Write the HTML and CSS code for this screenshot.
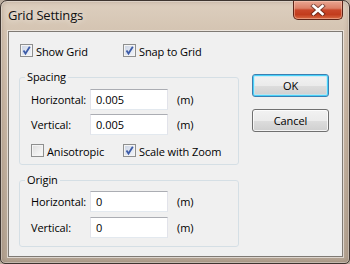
FILE: index.html
```html
<!DOCTYPE html>
<html>
<head>
<meta charset="utf-8">
<link rel="stylesheet" href="styles.css">
</head>
<body>
<div class="window">
  <div class="titlebar">
    <span class="title">Grid Settings</span>
    <div class="close">
      <svg width="16" height="12" viewBox="0 0 16 12"><path d="M3.5 2 L12.5 10 M12.5 2 L3.5 10" stroke="#3a1a14" stroke-width="4.5" stroke-linecap="square" fill="none" opacity=".55"/><path d="M3.5 2 L12.5 10 M12.5 2 L3.5 10" stroke="#fff" stroke-width="2.6" stroke-linecap="square" fill="none"/></svg>
    </div>
  </div>
  <div class="client">
    <div class="left">
      <div class="toprow">
        <label class="check"><span class="box on"><svg width="11" height="11" viewBox="0 0 11 11"><path d="M2.5 5.5 L4.5 8.5 L8.8 1.8" stroke="#3d5ca8" stroke-width="1.8" fill="none"/></svg></span><span class="txt">Show Grid</span></label>
        <label class="check"><span class="box on"><svg width="11" height="11" viewBox="0 0 11 11"><path d="M2.5 5.5 L4.5 8.5 L8.8 1.8" stroke="#3d5ca8" stroke-width="1.8" fill="none"/></svg></span><span class="txt">Snap to Grid</span></label>
      </div>
      <fieldset class="group spacing">
        <legend>Spacing</legend>
        <div class="body">
          <div class="field"><span class="lbl">Horizontal:</span><span class="input">0.005</span><span class="unit">(m)</span></div>
          <div class="field"><span class="lbl">Vertical:</span><span class="input">0.005</span><span class="unit">(m)</span></div>
          <div class="checkrow">
            <label class="check"><span class="box"></span><span class="txt">Anisotropic</span></label>
            <label class="check"><span class="box on"><svg width="11" height="11" viewBox="0 0 11 11"><path d="M2.5 5.5 L4.5 8.5 L8.8 1.8" stroke="#3d5ca8" stroke-width="1.8" fill="none"/></svg></span><span class="txt">Scale with Zoom</span></label>
          </div>
        </div>
      </fieldset>
      <fieldset class="group origin">
        <legend>Origin</legend>
        <div class="body">
          <div class="field"><span class="lbl">Horizontal:</span><span class="input">0</span><span class="unit">(m)</span></div>
          <div class="field"><span class="lbl">Vertical:</span><span class="input">0</span><span class="unit">(m)</span></div>
        </div>
      </fieldset>
    </div>
    <div class="right">
      <div class="btn default">OK</div>
      <div class="btn">Cancel</div>
    </div>
  </div>
</div>
</body>
</html>
```

FILE: styles.css
```css
* { box-sizing: border-box; }
body {
  margin: 0;
  font-family: "Open Sans", "Noto Sans", sans-serif;
  font-size: 11px;
  color: #000;
  background: #bcae9f;
}
.window {
  width: 350px;
  height: 264px;
  border: 1px solid #3e3530;
  border-radius: 7px 7px 5px 5px;
  background: linear-gradient(180deg, #ddcfbf 0px, #d5c5b3 28px, #c7b5a2 120px, #b3a392 100%);
  box-shadow: inset 0 0 0 1px rgba(255,255,255,0.35), inset 0 0 5px rgba(90,60,40,0.35);
  display: flex;
  flex-direction: column;
  overflow: hidden;
}
.titlebar {
  height: 30px;
  display: flex;
  justify-content: space-between;
  align-items: flex-start;
  padding-left: 7px;
}
.title {
  font-size: 13px;
  line-height: 18px;
  letter-spacing: -0.2px;
  margin-top: 5px;
  color: #111;
  text-shadow: 0 0 6px rgba(255,255,255,0.8);
}
.close {
  width: 50px;
  height: 19px;
  margin-right: 6px;
  border: 1px solid #5e2418;
  border-top: none;
  border-radius: 0 0 5px 5px;
  background: linear-gradient(180deg, #e9a692 0%, #dc8067 40%, #c9472a 50%, #c23c1d 75%, #d86a44 100%);
  box-shadow: inset 0 0 0 1px rgba(255,210,190,0.45);
  display: flex;
  align-items: center;
  justify-content: center;
}
.client {
  flex: 1;
  margin: 0 6px 6px 7px;
  background: #f0f0f0;
  border: 1px solid #7f7a74;
  box-shadow: 0 0 0 1px rgba(255,255,255,0.55);
  display: flex;
  gap: 13px;
  padding: 0 0 0 10px;
}
.left {
  width: 220px;
  padding-top: 12px;
  display: flex;
  flex-direction: column;
}
.toprow {
  display: grid;
  grid-template-columns: 103px auto;
  padding-left: 1px;
}
.check {
  display: flex;
  align-items: flex-start;
  gap: 3px;
}
.txt {
  line-height: 16px;
  letter-spacing: -0.1px;
  white-space: nowrap;
}
.box {
  width: 13px;
  height: 13px;
  border: 1px solid #8e8f8f;
  background: linear-gradient(135deg, #dcdcdc 0%, #f0f0f0 60%, #fbfbfb 100%);
  box-shadow: inset 0 0 0 1px #f4f4f4;
  display: flex;
  align-items: center;
  justify-content: center;
  flex: none;
}
.box.on {
  background: linear-gradient(135deg, #c9d2e3 0%, #e4e9f2 60%, #f3f5f9 100%);
}
.group {
  margin: 0;
  padding: 0;
  border: 1px solid #d5dfe5;
  border-radius: 3px;
  min-inline-size: 0;
}
.group legend {
  margin-left: 5px;
  padding: 0 2px;
  line-height: 14px;
  letter-spacing: -0.1px;
}
.spacing { margin-top: 10px; }
.origin { margin-top: 8px; }
.body {
  display: flex;
  flex-direction: column;
  gap: 4px;
  padding-left: 11px;
}
.spacing .body { padding-top: 5px; padding-bottom: 4px; }
.origin .body { padding-top: 4px; padding-bottom: 8px; gap: 5px; }
.field {
  display: grid;
  grid-template-columns: 59px 78px auto;
  align-items: center;
}
.lbl, .unit { letter-spacing: -0.1px; }
.unit { padding-left: 9px; }
.input {
  height: 21px;
  background: #fff;
  border: 1px solid #e2e3ea;
  border-top-color: #abadb3;
  border-bottom-color: #e3e9ef;
  padding-left: 5px;
  line-height: 19px;
}
.checkrow {
  display: grid;
  grid-template-columns: 92px auto;
  margin-top: 5px;
}
.right {
  width: 77px;
  padding-top: 42px;
  display: flex;
  flex-direction: column;
  gap: 12px;
}
.btn {
  height: 23px;
  border: 1px solid #707070;
  border-radius: 3px;
  background: linear-gradient(180deg, #f2f2f2 0%, #ebebeb 50%, #dddddd 51%, #cfcfcf 100%);
  box-shadow: inset 0 0 0 1px rgba(255,255,255,0.75);
  text-align: center;
  line-height: 21px;
  letter-spacing: -0.1px;
}
.btn.default {
  border-color: #3c7fb1;
  background: linear-gradient(180deg, #f2f2f2 0%, #ebebeb 50%, #dddddd 51%, #cfcfcf 100%);
  box-shadow: inset 0 0 0 1px #48d1f9, inset 0 0 0 2px rgba(180,235,252,0.6);
}
```
